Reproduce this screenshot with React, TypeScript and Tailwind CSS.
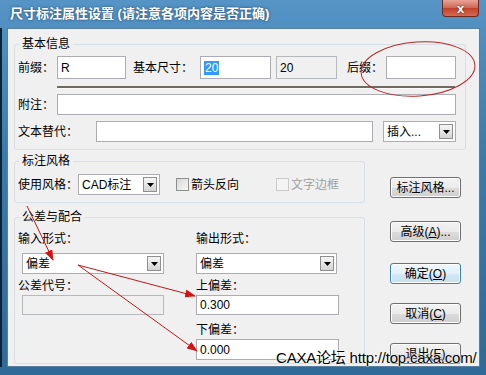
import React from 'react';
import clsx from 'clsx';

type BoxProps = { className?: string; children?: React.ReactNode };

const TextBox = ({ className, children, disabled }: BoxProps & { disabled?: boolean }) => (
  <div
    className={clsx(
      'flex shrink-0 items-center border pl-[3px] leading-[14px]',
      disabled ? 'border-[#b5b9bc] bg-[#f0f0f0]' : 'border-[#abadb3] bg-white',
      className
    )}
  >
    {children}
  </div>
);

const DropArrow = () => (
  <div className="flex h-[15px] w-[14px] shrink-0 items-center justify-center border border-[#8f8f8f] bg-[linear-gradient(to_bottom,#f6f6f6,#d4d4d4)]">
    <svg width="7" height="4" viewBox="0 0 7 4">
      <path d="M0 0h7L3.5 4z" fill="#000" />
    </svg>
  </div>
);

const Combo = ({ className, children }: BoxProps) => (
  <div className={clsx('flex shrink-0 items-center justify-between border border-[#abadb3] bg-white pl-[3px] pr-[2px] leading-[14px]', className)}>
    <span>{children}</span>
    <DropArrow />
  </div>
);

const Check = ({ disabled }: { disabled?: boolean }) => (
  <div
    className={clsx(
      'h-[13px] w-[13px] shrink-0 border',
      disabled ? 'border-[#cacaca] bg-[#f4f4f4]' : 'border-[#8e8f8f] bg-[linear-gradient(135deg,#d8d8d8,#f7f7f7)]'
    )}
  />
);

const Button = ({ children, focused, className }: BoxProps & { focused?: boolean }) => (
  <div
    className={clsx(
      'flex h-[21px] w-[71px] shrink-0 items-center justify-center rounded-[3px] border leading-[14px]',
      focused
        ? 'border-[#3c7fb1] bg-[linear-gradient(to_bottom,#eef7fc_0%,#e3f1f9_50%,#d2e8f5_51%,#c5e0f0_100%)] shadow-[inset_0_0_0_1px_#fff]'
        : 'border-[#707070] bg-[linear-gradient(to_bottom,#f2f2f2_0%,#ebebeb_50%,#dddddd_51%,#cfcfcf_100%)] shadow-[inset_0_0_0_1px_#fcfcfc]',
      className
    )}
  >
    {children}
  </div>
);

const Group = ({ title, className, children }: BoxProps & { title: string }) => (
  <fieldset className={clsx('rounded-[3px] border border-[#d5dfe5] px-[3px]', className)}>
    <legend className="ml-[1px] px-[3px] leading-[16px]">{title}</legend>
    {children}
  </fieldset>
);

export default function App() {
  return (
    <div className="relative flex h-[375px] w-[486px] flex-col overflow-hidden bg-[linear-gradient(to_bottom,#5694c6,#3b7bad_40%,#2f6a98)] font-['Liberation_Sans','Noto_Sans_CJK_SC',sans-serif] text-[12px] text-black">
      {/* title bar */}
      <div className="flex h-[28px] shrink-0 items-start">
        <div className="pl-[10px] pt-[6px] text-[13px] font-bold leading-[16px] text-white [text-shadow:0_0_3px_rgba(0,20,50,0.6)]">
          尺寸标注属性设置 (请注意各项内容是否正确)
        </div>
        <div className="ml-auto mr-[7px] flex h-[17px] w-[37px] items-center justify-center rounded-b-[4px] border border-t-0 border-[#6b2a22] bg-[linear-gradient(to_bottom,#e8a598,#cf6552_50%,#c0402c_51%,#d66a50)] text-[13px] font-bold leading-[13px] text-white [text-shadow:0_0_2px_#5a1a10]">
          x
        </div>
      </div>

      {/* body */}
      <div className="flex h-[339px] shrink-0 pr-[6px]">
        <div className="w-[7px] shrink-0 border-l-[2px] border-[#0d2233]" />
        <div className="flex-1 border border-[#5a7f9e] bg-[#f0f0f0] pl-[6px] pt-[7px]">
          <Group title="基本信息" className="w-[452px] pb-[7px]">
            <div className="mt-[4px] flex h-[23px] items-center">
              <span className="w-[39px] shrink-0">前缀：</span>
              <TextBox className="h-[23px] w-[69px]">R</TextBox>
              <span className="ml-[7px] w-[67px] shrink-0">基本尺寸：</span>
              <TextBox className="h-[23px] w-[71px]">
                <span className="bg-[#3399ff] px-[1px] text-white">20</span>
              </TextBox>
              <TextBox disabled className="ml-[5px] h-[23px] w-[61px]">20</TextBox>
              <span className="ml-[10px] w-[39px] shrink-0">后缀：</span>
              <TextBox className="h-[23px] w-[70px]" />
            </div>
            <div className="ml-[39px] mt-[7px] h-[3px] w-[398px] border-b border-[#fafafa] bg-[#6f6b63]" />
            <div className="mt-[5px] flex h-[21px] items-center">
              <span className="w-[39px] shrink-0">附注：</span>
              <TextBox className="h-[21px] w-[399px]" />
            </div>
            <div className="mt-[6px] flex h-[21px] items-center">
              <span className="w-[78px] shrink-0">文本替代：</span>
              <TextBox className="h-[21px] w-[277px]" />
              <Combo className="ml-[10px] h-[21px] w-[73px]">插入...</Combo>
            </div>
          </Group>

          <div className="mt-[3px] flex">
            <div className="flex w-[351px] flex-col">
              <Group title="标注风格" className="pb-[7px]">
                <div className="mt-[5px] flex h-[21px] items-center">
                  <span className="w-[60px] shrink-0">使用风格：</span>
                  <Combo className="h-[21px] w-[82px]">CAD标注</Combo>
                  <div className="ml-[16px]">
                    <Check />
                  </div>
                  <span className="ml-[2px]">箭头反向</span>
                  <div className="ml-[37px]">
                    <Check disabled />
                  </div>
                  <span className="ml-[2px] text-[#a0a0a0]">文字边框</span>
                </div>
              </Group>

              <Group title="公差与配合" className="mt-[6px] pb-[3px]">
                <div className="flex">
                  <div className="flex w-[178px] flex-col">
                    <span className="mt-[6px] leading-[16px]">输入形式：</span>
                    <Combo className="ml-[4px] mt-[6px] h-[21px] w-[142px]">偏差</Combo>
                    <span className="mt-[4px] leading-[16px]">公差代号：</span>
                    <TextBox disabled className="ml-[4px] mt-[1px] h-[20px] w-[142px]" />
                  </div>
                  <div className="flex flex-col">
                    <span className="mt-[6px] leading-[16px]">输出形式：</span>
                    <Combo className="mt-[6px] h-[21px] w-[141px]">偏差</Combo>
                    <span className="mt-[4px] leading-[16px]">上偏差：</span>
                    <TextBox className="mt-[1px] h-[20px] w-[143px]">0.300</TextBox>
                    <span className="mt-[7px] leading-[16px]">下偏差：</span>
                    <TextBox className="mt-[1px] h-[21px] w-[143px]">0.000</TextBox>
                  </div>
                </div>
              </Group>
            </div>

            <div className="ml-[25px] flex flex-col">
              <Button className="mt-[24px]">标注风格...</Button>
              <Button className="mt-[23px]">
                高级(<span className="underline">A</span>)...
              </Button>
              <Button focused className="mt-[21px]">
                确定(<span className="underline">O</span>)
              </Button>
              <Button className="mt-[19px]">
                取消(<span className="underline">C</span>)
              </Button>
              <Button className="mt-[19px]">
                退出(<span className="underline">E</span>)
              </Button>
            </div>
          </div>
        </div>
      </div>

      {/* red annotations drawn over the dialog */}
      <svg className="pointer-events-none absolute left-0 top-0" width="486" height="375" viewBox="0 0 486 375">
        <defs>
          <marker id="ah" markerWidth="11" markerHeight="8" refX="10" refY="4" orient="auto" markerUnits="userSpaceOnUse">
            <path d="M0 0L11 4L0 8z" fill="#d41414" />
          </marker>
        </defs>
        <ellipse cx="418" cy="69" rx="57" ry="27" transform="rotate(-4 418 69)" fill="none" stroke="#b8262a" strokeWidth="1" />
        <line x1="27" y1="206" x2="53" y2="260" stroke="#c01818" strokeWidth="1" markerEnd="url(#ah)" />
        <line x1="78" y1="265" x2="195" y2="296" stroke="#c01818" strokeWidth="1" markerEnd="url(#ah)" />
        <line x1="78" y1="265" x2="197" y2="351" stroke="#c01818" strokeWidth="1" markerEnd="url(#ah)" />
      </svg>

      {/* forum watermark, lies over the 退出 button as in the screenshot */}
      <div className="absolute left-[276px] top-[348px] whitespace-nowrap text-[15px] leading-[20px] tracking-[-0.2px] text-black [text-shadow:0_0_2px_#fff,0_0_2px_#fff,0_0_1px_#fff]">
        CAXA论坛 http://top.caxa.com/
      </div>
    </div>
  );
}
